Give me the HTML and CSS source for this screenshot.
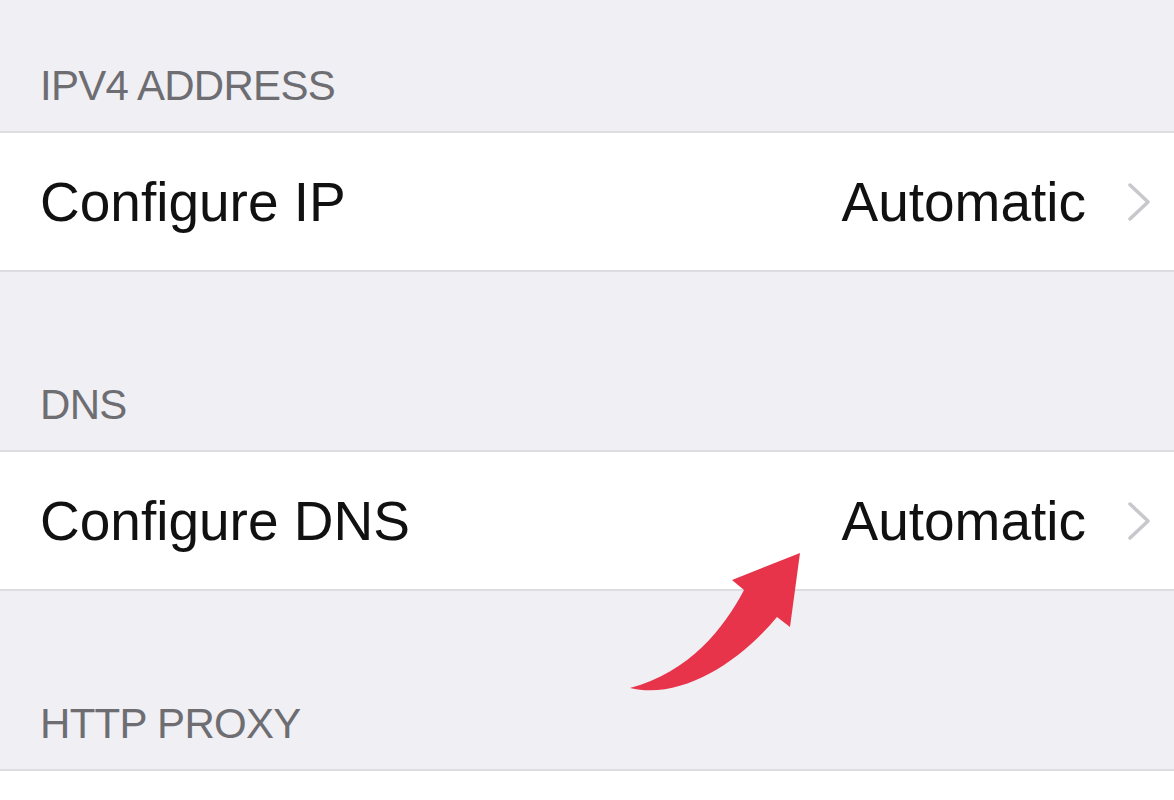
FILE: index.html
```html
<!DOCTYPE html>
<html lang="en">
<head>
    <meta charset="UTF-8">
    <title>Wi-Fi</title>
    <link rel="stylesheet" href="styles.css">
</head>
<body>
    <main class="settings">
        <section class="group first">
            <h2 class="group-header">IPV4 ADDRESS</h2>
            <ul class="cells">
                <li class="cell">
                    <span class="cell-title">Configure IP</span>
                    <span class="cell-value">Automatic</span>
                    <svg class="chevron" width="23" height="38" viewBox="0 0 23 38">
                        <polyline points="2,2 20,19 2,36" fill="none" stroke="#c7c7cc" stroke-width="3.5" stroke-linecap="round" stroke-linejoin="round"/>
                    </svg>
                </li>
            </ul>
        </section>

        <section class="group">
            <h2 class="group-header">DNS</h2>
            <ul class="cells">
                <li class="cell">
                    <span class="cell-title">Configure DNS</span>
                    <span class="cell-value">Automatic</span>
                    <svg class="chevron" width="23" height="38" viewBox="0 0 23 38">
                        <polyline points="2,2 20,19 2,36" fill="none" stroke="#c7c7cc" stroke-width="3.5" stroke-linecap="round" stroke-linejoin="round"/>
                    </svg>
                </li>
            </ul>
        </section>

        <section class="group">
            <h2 class="group-header">HTTP PROXY</h2>
            <ul class="cells">
                <li class="cell"></li>
            </ul>
        </section>

        <!-- pointer drawn over the DNS row -->
        <svg class="pointer" width="1174" height="800" viewBox="0 0 1174 800">
            <path d="M800,553 L732,580 L744,590 C724,628 690,672 630,688 C680,700 738,664 777,617 L790,627 Z" fill="#e8344a"/>
        </svg>
    </main>
</body>
</html>
```

FILE: styles.css
```css
* { box-sizing: border-box; }
html, body {
    margin: 0;
    height: 100%;
    overflow: hidden;
}
body {
    font-family: 'Liberation Sans', Arial, sans-serif;
    background: #efeff4;
    color: #111;
}
.settings {
    position: relative;
}
.group-header {
    margin: 0;
    height: 178px;
    padding: 0 40px 24px;
    display: flex;
    align-items: flex-end;
    font-size: 42px;
    line-height: 42px;
    font-weight: normal;
    letter-spacing: -0.7px;
    color: #6d6d72;
}
.group.first .group-header { height: 131px; }
.cells {
    list-style: none;
    margin: 0;
    padding: 0;
    background: #fff;
    border-top: 2px solid #dcdce1;
    border-bottom: 2px solid #dcdce1;
}
.cell {
    height: 137px;
    padding: 0 23px 0 40px;
    display: flex;
    align-items: center;
    font-size: 55px;
}
.cell-title { flex: 1; }
.cell-value { margin-right: 42px; }
.chevron { display: block; }
.pointer {
    position: absolute;
    top: 0;
    left: 0;
    pointer-events: none;
}
```
